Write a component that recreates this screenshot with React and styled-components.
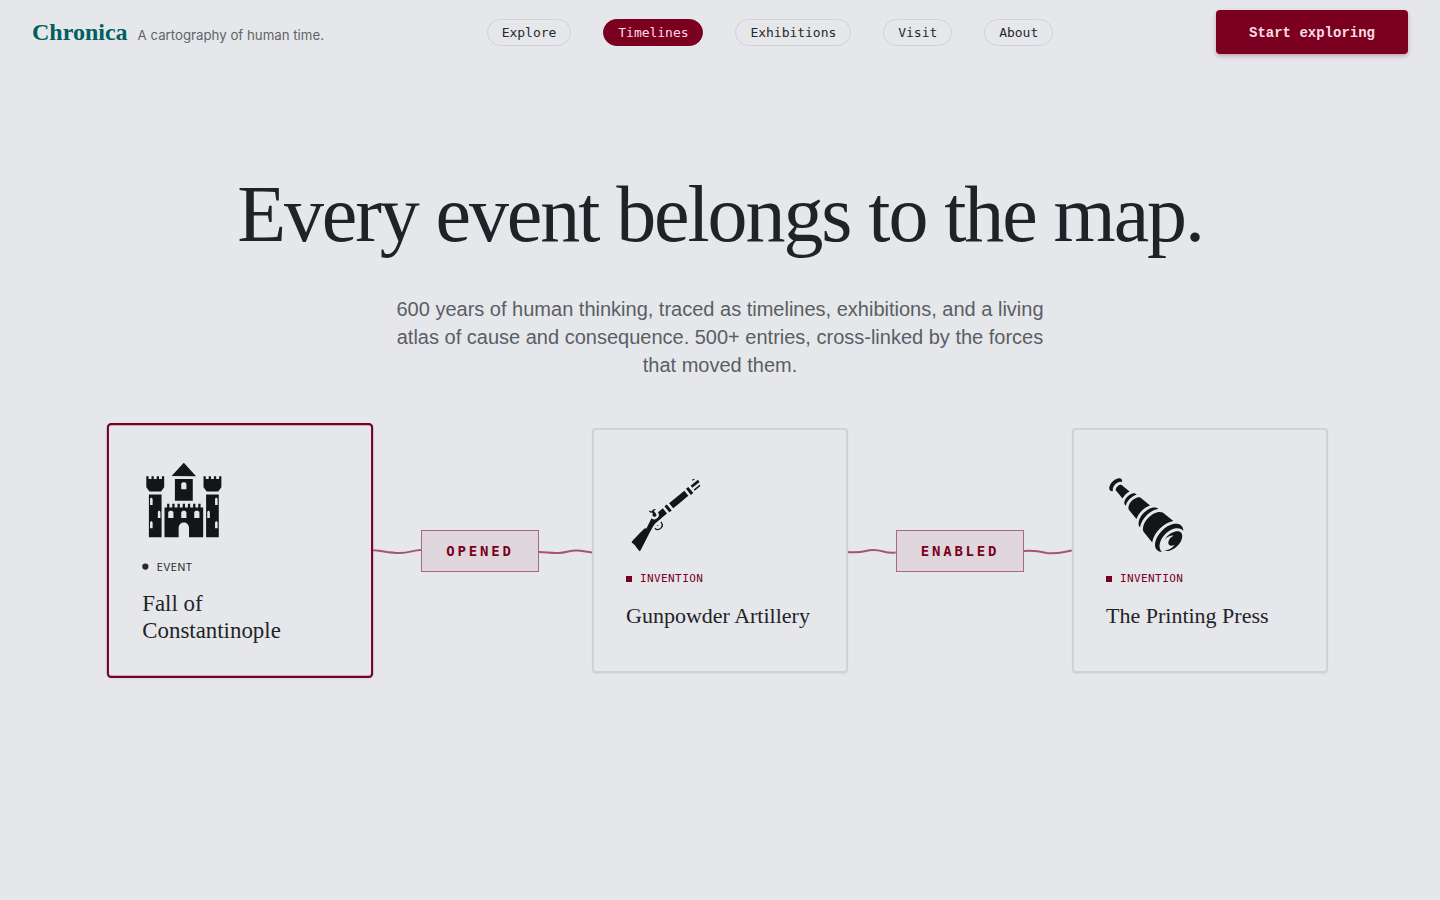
import React from 'react';
import styled, { createGlobalStyle } from 'styled-components';
import { GiCastle, GiMusket, GiSpyglass } from 'react-icons/gi';

const MONO = '"DejaVu Sans Mono", "Liberation Mono", monospace';
const WINE = '#7b0020';

const Global = createGlobalStyle`
  html, body {
    margin: 0;
    background: #e5e7eb;
  }
  body {
    color: #1f2328;
    font-family: "Liberation Sans", Arial, sans-serif;
  }
  * {
    box-sizing: border-box;
  }
`;

const Page = styled.div`
  min-height: 900px;
  background: #e5e7eb;
  overflow: hidden;
`;

const Header = styled.header`
  display: flex;
  align-items: center;
  justify-content: space-between;
  padding: 10px 32px;
`;

const Brand = styled.div`
  display: flex;
  align-items: baseline;
  gap: 10px;
`;

const Logo = styled.span`
  font-family: "Liberation Serif", serif;
  font-weight: 700;
  font-size: 24px;
  color: #005f5f;
`;

const Tagline = styled.span`
  font-family: Inter, sans-serif;
  font-size: 13.25px;
  color: #5f6368;
`;

const Nav = styled.nav`
  display: flex;
  gap: 32px;
`;

const Pill = styled.a`
  display: block;
  padding: 5px 14px 0;
  height: 27px;
  border-radius: 14px;
  border: 1px solid ${(p) => (p.$active ? WINE : '#d0d2d8')};
  background: ${(p) => (p.$active ? WINE : 'transparent')};
  color: ${(p) => (p.$active ? '#fbdde3' : '#26292e')};
  font-family: ${MONO};
  font-size: 13px;
  letter-spacing: -0.03px;
  line-height: 15px;
`;

const Cta = styled.button`
  width: 192px;
  height: 44px;
  padding: 1px 0 0;
  border: 0;
  border-radius: 4px;
  background: ${WINE};
  color: #fbdde3;
  font-family: "Liberation Mono", monospace;
  font-weight: 700;
  font-size: 14px;
  box-shadow: 0 2px 4px rgba(123, 0, 32, 0.3);
`;

const Hero = styled.section`
  display: flex;
  flex-direction: column;
  align-items: center;
  padding-top: 106px;
`;

const Title = styled.h1`
  margin: 0;
  font-family: "Liberation Serif", serif;
  font-weight: 400;
  font-size: 80px;
  line-height: 88px;
  letter-spacing: -2.1px;
  color: #1f2328;
`;

const Lead = styled.p`
  margin: 37px 0 0;
  width: 680px;
  text-align: center;
  font-size: 20px;
  line-height: 28px;
  color: #5a5e64;
`;

const Chain = styled.div`
  display: flex;
  align-items: stretch;
  margin: 49px 112px 0;
`;

const Card = styled.article`
  position: relative;
  z-index: 1;
  flex: 0 0 256px;
  height: 245px;
  display: flex;
  flex-direction: column;
  justify-content: center;
  padding: 32px 32px 30px;
  border-radius: 4px;
  background: #e5e7eb;
  border: 2px solid ${(p) => (p.$focus ? WINE : '#cfd1d6')};
  box-shadow: 0 1px 2px rgba(0, 0, 0, 0.06);
  transform: ${(p) => (p.$focus ? 'scale(1.04)' : 'none')};
`;

const IconBox = styled.div`
  width: 80px;
  height: 80px;
  color: #141518;
  font-size: 80px;
  line-height: 0;
`;

const Kind = styled.div`
  display: flex;
  align-items: center;
  gap: 8px;
  margin-top: 17px;
  height: 14px;
  font-family: ${(p) => (p.$event ? 'Inter, sans-serif' : MONO)};
  font-size: ${(p) => (p.$event ? '10px' : '11px')};
  letter-spacing: ${(p) => (p.$event ? '0.3px' : '0.4px')};
  color: ${(p) => (p.$event ? '#26292e' : WINE)};
`;

const Marker = styled.i`
  width: 6px;
  height: 6px;
  background: ${(p) => (p.$event ? '#26292e' : WINE)};
  border-radius: ${(p) => (p.$event ? '50%' : '0')};
`;

const CardTitle = styled.h3`
  margin: 17px 0 0;
  font-family: "Liberation Serif", serif;
  font-weight: 400;
  font-size: 22px;
  line-height: 26px;
  color: #1f2328;
`;

const Link = styled.div`
  flex: 0 0 224px;
  min-width: 0;
  display: flex;
  align-items: center;
`;

const WaveSvg = styled.svg`
  flex: 1 1 0;
  width: 0;
  height: 8px;
  min-width: 0;
`;

const LinkLabel = styled.span`
  padding: 10px 24px;
  height: 42px;
  border: 1px solid #aa6a7d;
  background: #e0d7dc;
  color: ${WINE};
  font-family: ${MONO};
  font-weight: 700;
  font-size: 14px;
  line-height: 20px;
  letter-spacing: 2.8px;
`;

const Wave = ({ d }) => (
  <WaveSvg viewBox="0 0 54 8" preserveAspectRatio="none">
    <path d={d} fill="none" stroke="#a3566d" strokeWidth="2" />
  </WaveSvg>
);

const App = () => (
  <Page>
    <Global />
    <Header>
      <Brand>
        <Logo>Chronica</Logo>
        <Tagline>A cartography of human time.</Tagline>
      </Brand>
      <Nav>
        <Pill>Explore</Pill>
        <Pill $active>Timelines</Pill>
        <Pill>Exhibitions</Pill>
        <Pill>Visit</Pill>
        <Pill>About</Pill>
      </Nav>
      <Cta>Start exploring</Cta>
    </Header>

    <Hero>
      <Title>Every event belongs to the map.</Title>
      <Lead>
        600 years of human thinking, traced as timelines, exhibitions, and a living atlas of cause
        and consequence. 500+ entries, cross-linked by the forces that moved them.
      </Lead>
    </Hero>

    <Chain>
      <Card $focus>
        <IconBox><GiCastle /></IconBox>
        <Kind $event><Marker $event />EVENT</Kind>
        <CardTitle>Fall of<br />Constantinople</CardTitle>
      </Card>
      <Link>
        <Wave d="M0 3 C12 3 20 6 32 6 C42 6 46 3 54 3" />
        <LinkLabel>OPENED</LinkLabel>
        <Wave d="M0 5 C8 5 12 6.5 20 6 C28 5.5 30 3.5 38 3.5 C44 3.5 48 5 54 5.5" />
      </Link>
      <Card>
        <IconBox><GiMusket /></IconBox>
        <Kind><Marker />INVENTION</Kind>
        <CardTitle>Gunpowder Artillery</CardTitle>
      </Card>
      <Link>
        <Wave d="M0 5 C8 5.5 12 6 20 4 C28 2 34 3 40 4.5 C46 6 50 6 54 5.5" />
        <LinkLabel>ENABLED</LinkLabel>
        <Wave d="M0 4 C10 3 16 4 26 6 C36 7.5 44 5 54 3.5" />
      </Link>
      <Card>
        <IconBox><GiSpyglass /></IconBox>
        <Kind><Marker />INVENTION</Kind>
        <CardTitle>The Printing Press</CardTitle>
      </Card>
    </Chain>
  </Page>
);

export default App;
